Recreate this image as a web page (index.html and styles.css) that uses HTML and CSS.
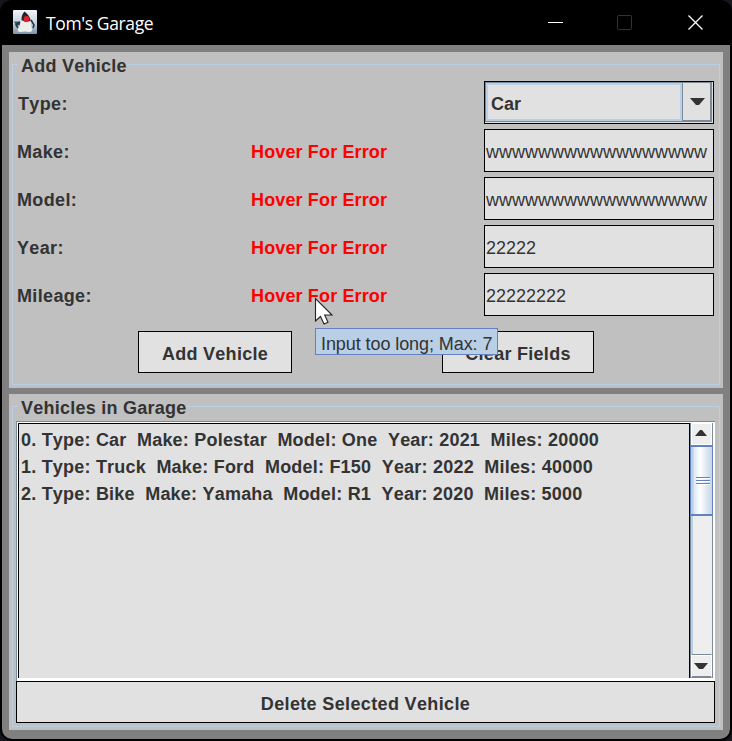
FILE: index.html
```html
<!DOCTYPE html>
<html lang="en">
<head>
<meta charset="utf-8">
<title>Tom's Garage</title>
<link rel="stylesheet" href="styles.css">
</head>
<body>
<div class="window">
  <header class="titlebar">
    <svg class="app-icon" width="24" height="24" viewBox="0 0 24 24">
      <defs><linearGradient id="sky" x1="0" y1="0" x2="0" y2="1"><stop offset="0" stop-color="#f2f5f8"/><stop offset=".55" stop-color="#c3d1de"/><stop offset="1" stop-color="#7b94ab"/></linearGradient></defs>
      <rect width="24" height="24" rx="1" fill="url(#sky)"/>
      <path d="M1 11.500h6v4H3z" fill="#37566d"/>
      <path d="M18 10l3 5-1 3M7 12l-4 3 2 3" stroke="#26313b" stroke-width="1.500" fill="none"/>
      <path d="M9 10L5 19q-1 3 2 3l5-.5 4 .5q4 0 3-3L17 10z" fill="#eeeeec"/>
      <path d="M11.500 1.500C9 4 8.500 7 8.500 10l4 2 5-1c0-4-3-7-6-9.500z" fill="#222429"/>
      <circle cx="13.500" cy="9" r="2.900" fill="#e3202b"/>
    </svg>
    <span class="title">Tom's Garage</span>
    <svg class="controls" width="158" height="20" viewBox="0 0 158 20" fill="none">
      <path d="M0 10.500h15" stroke="#fff"/>
      <rect x="69.500" y="3.500" width="14" height="14" rx="1" stroke="#333"/>
      <path d="M140.500 3.500l14 14m0-14l-14 14" stroke="#fff" stroke-width="1.300"/>
    </svg>
  </header>
  <main class="content">
    <section class="panel">
      <div class="group">
        <h2 class="legend">Add Vehicle</h2>
        <div class="form">
          <div class="row"><label class="name first">Type:</label><span class="error"></span>
            <div class="combo"><div class="combo-value">Car</div><div class="combo-button"><svg width="15" height="7"><path d="M0 0h15L9 7H6z" fill="#333"/></svg></div></div>
          </div>
          <div class="row"><label class="name">Make:</label><span class="error">Hover For Error</span><div class="field">wwwwwwwwwwwwwwwww</div></div>
          <div class="row"><label class="name">Model:</label><span class="error">Hover For Error</span><div class="field">wwwwwwwwwwwwwwwww</div></div>
          <div class="row"><label class="name">Year:</label><span class="error">Hover For Error</span><div class="field">22222</div></div>
          <div class="row"><label class="name">Mileage:</label><span class="error">Hover For Error</span><div class="field">22222222</div></div>
        </div>
        <div class="actions"><button class="button add">Add Vehicle</button><button class="button clear">Clear Fields</button></div>
      </div>
    </section>
    <section class="panel">
      <div class="group">
        <h2 class="legend">Vehicles in Garage</h2>
        <div class="scrollpane">
          <ul class="list">
            <li>0. Type: Car&nbsp; Make: Polestar&nbsp; Model: One&nbsp; Year: 2021&nbsp; Miles: 20000</li>
            <li>1. Type: Truck&nbsp; Make: Ford&nbsp; Model: F150&nbsp; Year: 2022&nbsp; Miles: 40000</li>
            <li>2. Type: Bike&nbsp; Make: Yamaha&nbsp; Model: R1&nbsp; Year: 2020&nbsp; Miles: 5000</li>
          </ul>
          <div class="scrollbar">
            <div class="arrow up"><svg width="12" height="6"><path d="M0 6L5 0h2l5 6z" fill="#333"/></svg></div>
            <div class="thumb"><i class="grip"></i><i class="grip"></i><i class="grip"></i></div>
            <div class="track"></div>
            <div class="arrow down"><svg width="14" height="6"><path d="M0 0h14L9 6H5z" fill="#333"/></svg></div>
          </div>
        </div>
        <button class="button delete">Delete Selected Vehicle</button>
      </div>
    </section>
  </main>
</div>
<div class="tooltip">Input too long; Max: 7</div>
<svg class="cursor" width="20" height="30" viewBox="0 0 20 30"><path d="M1.500 1.500v22.500l5-4.500 3.500 7.500 4-1.700-3.300-7.300H18z" fill="#fff" stroke="#222" stroke-width="1.100"/></svg>
</body>
</html>
```
FILE: styles.css
```css
* { box-sizing: border-box; }
body {
  margin: 0;
  width: 732px;
  height: 741px;
  overflow: hidden;
  background: #15151b;
  color: #333;
  font: bold 18px/22px "Liberation Sans", Arial, sans-serif;
  font-kerning: none;
}
.window {
  height: 741px;
  padding: 0 2px 2px;
  background: #000;
  border-radius: 12px;
}
.titlebar {
  height: 45px;
  display: flex;
  align-items: center;
  padding-left: 11px;
  color: #fff;
  font: 17.5px/24px "Open Sans", "Noto Sans", sans-serif;
}
.app-icon { margin-top: -1px; }
.title {
  margin-left: 9px;
  width: 109px;
  letter-spacing: -0.37px;
  white-space: nowrap;
}
.controls { margin: 0 0 1px 393px; }
.content {
  height: 694px;
  padding: 7px;
  display: flex;
  flex-direction: column;
  gap: 6px;
  background: #808080;
  border-radius: 0 0 10px 10px;
}
.panel {
  width: 714px;
  height: 336px;
  padding: 12px 3px 3px;
  background: #c0c0c0;
}
.group {
  height: 321px;
  border: 1px solid #b8cfe5;
}
.legend {
  width: max-content;
  height: 17px;
  margin: -11px 0 0 5px;
  padding: 0 0 0 3px;
  background: #c0c0c0;
  font-size: 18px;
  line-height: 24px;
  letter-spacing: 0.24px;
}
.form {
  margin-left: 4px;
  padding-top: 10px;
  display: grid;
  gap: 5px;
}
.row {
  display: grid;
  grid-template: 43px / 234px 233px 230px;
  line-height: 46px;
}
.name { letter-spacing: 0.35px; }
.first { padding-left: 1px; }
.error {
  color: #f00;
  letter-spacing: 0.14px;
}
.field, .combo {
  border: 1px solid #000;
  background: #e1e1e1;
}
.field {
  padding-left: 1px;
  font-weight: normal;
  line-height: 44px;
}
.combo {
  display: flex;
  padding: 0 1px 1px 0;
}
.combo-value {
  flex: 1;
  border: 1px solid #7a8a99;
  border-right: 0;
  box-shadow: inset 0 0 0 2px #b8cfe5;
  padding-left: 5px;
  line-height: 42px;
}
.combo-button {
  width: 30px;
  padding-left: 1px;
  border: 1px solid #7a8a99;
  border-right-width: 2px;
  border-bottom-width: 2px;
  display: flex;
  align-items: center;
  justify-content: center;
}
.actions {
  display: flex;
  gap: 150px;
  margin: 15px 0 0 125px;
}
.button {
  height: 42px;
  padding: 3px 0 0;
  border: 1px solid #000;
  border-radius: 0;
  background: #e1e1e1;
  color: #333;
  font: inherit;
  font-kerning: none;
  letter-spacing: 0.28px;
}
.add { width: 154px; }
.clear { width: 152px; }
.scrollpane {
  display: flex;
  width: 699px;
  height: 260px;
  margin: 8px 0 0 3px;
  padding: 1px 2px 3px 1px;
  background: #fff;
  border-top: 1px solid #7a8a99;
  border-left: 1px solid #7a8a99;
}
.list {
  flex: 1;
  margin: 0;
  padding: 3px 2px;
  list-style: none;
  line-height: 27px;
  letter-spacing: 0.21px;
  background: #e1e1e1;
  border: 1px solid #000;
  border-bottom: 0;
}
.scrollbar {
  width: 23px;
  display: flex;
  flex-direction: column;
  background: #eee;
  border-left: 1px solid #7a8a99;
  border-right: 1px solid #7a8a99;
}
.arrow {
  border: 1px solid #fff;
  display: flex;
  align-items: center;
  justify-content: center;
}
.up { height: 22px; padding: 0 1px 2px 0; }
.down {
  height: 24px;
  padding-right: 1px;
  border-top: 1px solid #7a8a99;
  border-bottom: 2px solid #7a8a99;
  box-shadow: inset 0 1px #fff;
}
.arrow svg { flex: none; }
.thumb {
  height: 71px;
  margin: 0 -1px;
  padding: 1px 2px 0 5px;
  border: 2px solid #6382bf;
  border-width: 2px 1px;
  background: linear-gradient(90deg, #b8cfe5 0 2px, #dce7f1 3px, #fff 9px, #c8d9e9 20px);
  display: flex;
  flex-direction: column;
  justify-content: center;
  gap: 1px;
}
.grip {
  width: 14px;
  height: 2px;
  background: #fff;
  border-top: 1px solid #6382bf;
}
.track {
  flex: 1;
  border-left: 2px solid #b8cfe5;
}
.delete {
  display: block;
  width: 699px;
  margin-left: 3px;
  letter-spacing: 0.36px;
}
.tooltip {
  position: absolute;
  left: 315px;
  top: 328px;
  width: 183px;
  height: 27px;
  padding-left: 5px;
  border: 1px solid #6382bf;
  background: #b8cfe5;
  font-weight: normal;
  letter-spacing: -0.08px;
  line-height: 30px;
  white-space: nowrap;
}
.cursor {
  position: absolute;
  left: 314px;
  top: 297px;
}
```
